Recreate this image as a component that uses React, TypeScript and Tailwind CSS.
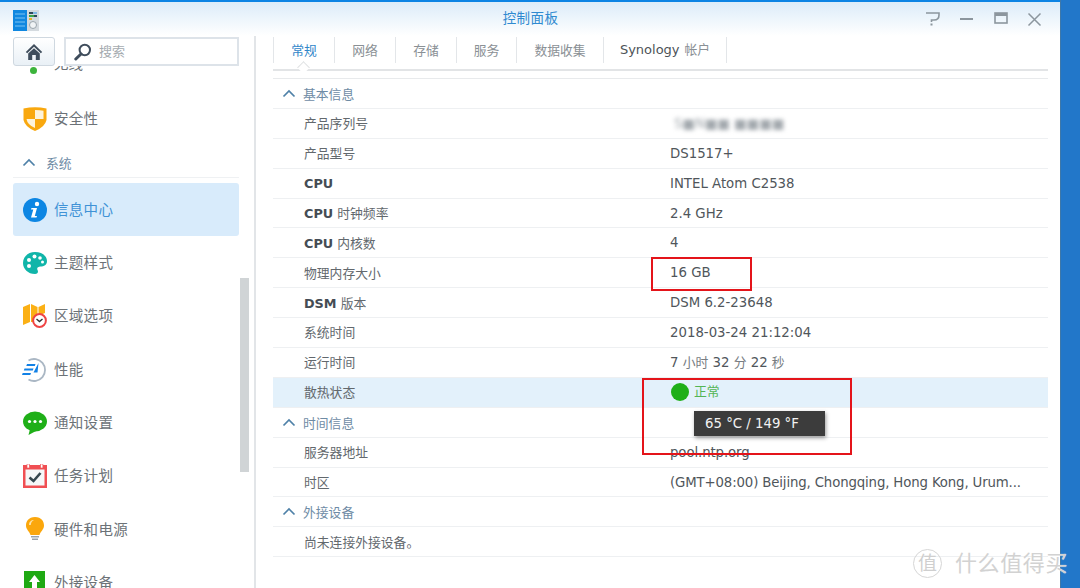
import React from "react";

const cjk = '"DejaVu Sans","Noto Sans CJK SC",sans-serif';

function Chevron({ className = "" }: { className?: string }) {
  return (
    <svg width="14" height="9" viewBox="0 0 14 9" className={className}>
      <path d="M1.5 7.5 L7 2 L12.5 7.5" fill="none" stroke="#4f81a8" strokeWidth="1.7" />
    </svg>
  );
}

function AppLogo() {
  return (
    <svg width="27" height="23" viewBox="0 0 27 23">
      <rect x="0" y="1" width="14" height="21" fill="#0f87e0" />
      <path d="M2 5h10M2 9h10M2 13h10M2 17h10" stroke="#7cc3f3" strokeWidth="1" />
      <rect x="14" y="1" width="12" height="21" fill="#d4dadf" />
      <rect x="16" y="3" width="4" height="2" fill="#2f4858" />
      <rect x="20" y="3" width="4" height="2" fill="#7cb6e2" />
      <rect x="16" y="6" width="5" height="2" fill="#3aa54a" />
      <rect x="21" y="6" width="3" height="2" fill="#2f4858" />
      <rect x="16" y="9" width="3" height="2" fill="#e8b12e" />
      <circle cx="20" cy="16" r="3.5" fill="#f0f3f5" stroke="#9aa5ad" />
    </svg>
  );
}

function HomeIcon() {
  return (
    <svg width="18" height="18" viewBox="0 0 18 18">
      <path d="M9 1 L0.8 9 L2.2 10.2 L9 3.8 L15.8 10.2 L17.2 9 Z" fill="#3f4d5c" />
      <path d="M3.2 10.5 L9 5.2 L14.8 10.5 V17 H10.8 V12 H7.2 V17 H3.2 Z" fill="#3f4d5c" />
    </svg>
  );
}

function SearchIcon() {
  return (
    <svg width="18" height="18" viewBox="0 0 18 18">
      <circle cx="10.8" cy="7" r="5.2" fill="none" stroke="#3f4d5c" strokeWidth="2" />
      <path d="M7 11 L1.8 16" stroke="#3f4d5c" strokeWidth="3" strokeLinecap="round" />
    </svg>
  );
}

const icons: Record<string, React.ReactNode> = {
  shield: (
    <svg width="24" height="24" viewBox="0 0 24 24">
      <path d="M0.5 1.5 Q12 -1 23.5 1.5 V13 Q22 20 12 24 Q2 20 0.5 13 Z" fill="#f9a80f" />
      <path d="M12 3 Q17 3 20.5 3.8 V12 H12 Z" fill="#fdf3dc" />
      <path d="M12 12 H3.5 Q4.5 18 12 21 Z" fill="#fdf3dc" />
    </svg>
  ),
  info: (
    <svg width="24" height="24" viewBox="0 0 24 24">
      <circle cx="12" cy="12" r="12" fill="#0d86e3" />
      <circle cx="14" cy="6" r="2.2" fill="#fff" />
      <path d="M8.5 10 H14 L11.8 18 H14 L13.5 19.6 H8 L10.3 11.6 H8 Z" fill="#fff" />
    </svg>
  ),
  palette: (
    <svg width="24" height="24" viewBox="0 0 24 24">
      <path d="M12 1 C5 1 0 6 0 12 C0 18 5 23 12 23 C15 23 15.5 20.5 14.5 19 C13.5 17 15 15.5 17.5 15.5 C21 15.5 24 14 24 10 C24 5 19 1 12 1 Z" fill="#10b5a9" />
      <circle cx="6" cy="9" r="2" fill="#fff" />
      <circle cx="11.5" cy="5.5" r="2" fill="#fff" />
      <circle cx="17" cy="7" r="1.8" fill="#fff" />
      <circle cx="19.5" cy="11" r="1.5" fill="#fff" />
      <circle cx="6" cy="15" r="2" fill="#fff" />
    </svg>
  ),
  map: (
    <svg width="24" height="24" viewBox="0 0 24 24">
      <path d="M0 3 L7 0 V18 L0 21 Z" fill="#fbb015" />
      <path d="M8 0 L14.5 3 V18 L8 18 Z" fill="#fbb015" />
      <path d="M15.5 3 L22 0 V9 L15.5 12 Z" fill="#fbb015" />
      <circle cx="16.5" cy="16.5" r="6.4" fill="#fff" stroke="#ef4444" strokeWidth="2" />
      <path d="M13.5 15 L16.5 17.5 L19.5 15" fill="none" stroke="#333" strokeWidth="1.4" />
    </svg>
  ),
  perf: (
    <svg width="26" height="24" viewBox="0 0 26 24">
      <path d="M6.5 2.5 A11 11 0 1 1 6.5 21.5" fill="none" stroke="#aab7c4" strokeWidth="1.8" />
      <path d="M5 6 H13.5 L12.8 8 H4.3 Z M2.5 10.5 H11.5 L10.8 12.5 H1.8 Z M0.7 15 H9 L8.3 17 H0 Z" fill="#1281e6" />
      <path d="M16.5 5 L11.5 14.5 H15.5 Z" fill="#1281e6" />
    </svg>
  ),
  chat: (
    <svg width="24" height="24" viewBox="0 0 24 24">
      <ellipse cx="12" cy="10.5" rx="12" ry="10" fill="#1faf18" />
      <path d="M7 18 L5.5 24 L13 20 Z" fill="#1faf18" />
      <circle cx="6.5" cy="10.5" r="1.6" fill="#fff" />
      <circle cx="12" cy="10.5" r="1.6" fill="#fff" />
      <circle cx="17.5" cy="10.5" r="1.6" fill="#fff" />
    </svg>
  ),
  calendar: (
    <svg width="24" height="24" viewBox="0 0 24 24">
      <rect x="0" y="1" width="24" height="23" fill="#f04f53" />
      <rect x="2.5" y="5.5" width="19" height="16" fill="#f6f7f8" />
      <rect x="4" y="0" width="2.4" height="4" fill="#fff" stroke="#f04f53" strokeWidth="0.6" />
      <rect x="17.5" y="0" width="2.4" height="4" fill="#fff" stroke="#f04f53" strokeWidth="0.6" />
      <path d="M6.5 13.5 L10.5 17 L17.5 9" fill="none" stroke="#37474f" strokeWidth="2.6" />
    </svg>
  ),
  bulb: (
    <svg width="24" height="24" viewBox="0 0 24 24">
      <path d="M12 0 C5.5 0 3 4.6 3 8.5 C3 12.5 6.5 14.5 7.5 18 H16.5 C17.5 14.5 21 12.5 21 8.5 C21 4.6 18.5 0 12 0 Z" fill="#fba70c" />
      <path d="M6 8 C6 5 8 3 11 3 C8.5 4 8 6 7.8 8 Z" fill="#fde2a8" />
      <path d="M8 19 H16 V20.5 H8 Z M9 21.5 H15 V23 H9 Z" fill="#9aa3a9" />
    </svg>
  ),
  upload: (
    <svg width="24" height="24" viewBox="0 0 24 24">
      <rect x="1" y="0" width="21" height="24" fill="#1fa913" />
      <path d="M11.5 4 L17 11 H14 V17 H9 V11 H6 Z" fill="#fff" />
    </svg>
  ),
};

function SideItem({ icon, label, active, h = "h-[53.3px]" }: { icon: string; label: string; active?: boolean; h?: string }) {
  return (
    <div className={`flex items-center pl-[9px] w-[226px] shrink-0 ${h} ${active ? "bg-[#d8ebfb] rounded-[3px]" : ""}`}>
      <span className="w-[26px] h-6 flex items-center justify-center shrink-0">{icons[icon]}</span>
      <span className={`ml-[6px] pt-[2px] text-[14.5px] tracking-[0.3px] ${active ? "text-[#3f92d6]" : "text-[#6c7277]"}`}>{label}</span>
    </div>
  );
}

function Row({ label, children, hover }: { label: React.ReactNode; children: React.ReactNode; hover?: boolean }) {
  return (
    <div className={`flex items-center h-[29.9px] border-b border-[#eef0f2] ${hover ? "bg-[#e3f1fb]" : ""}`}>
      <div className="w-[397px] pl-[31px] shrink-0 pt-[1px] text-[12.8px] text-[#62686d]">{label}</div>
      <div className="text-[13.3px] pt-[1px] text-[#50565b]">{children}</div>
    </div>
  );
}

function B({ children }: { children: React.ReactNode }) {
  return <b className="font-bold text-[#454c54]">{children}</b>;
}

function Z({ children }: { children: React.ReactNode }) {
  return <span className="text-[12.8px] text-[#777d82]">{children}</span>;
}

function Section({ label }: { label: string }) {
  return (
    <div className="flex items-center h-[29.9px] border-b border-[#eef0f2] pl-[9px]">
      <Chevron />
      <span className="ml-[7px] pt-[2px] text-[12.8px] text-[#6e8ba5]">{label}</span>
    </div>
  );
}

const tabs: [string, string][] = [
  ["常规", "w-[61px]"],
  ["网络", "w-[61px]"],
  ["存储", "w-[61px]"],
  ["服务", "w-[60px]"],
  ["数据收集", "w-[87px]"],
];

export default function App() {
  return (
    <div className="relative w-[1080px] h-[588px] overflow-hidden bg-[#2277c9] flex" style={{ fontFamily: cjk }}>
      <div className="w-[1061px] h-full bg-white border-r border-[#3f78a8] flex flex-col shrink-0">
        {/* title bar */}
        <div className="h-[36px] shrink-0 border-t-2 border-[#0c84e4] bg-gradient-to-b from-[#dcecf9] to-white flex items-center relative">
          <div className="ml-[13px] mt-[2px]"><AppLogo /></div>
          <div className="absolute left-0 right-0 top-[6px] text-center text-[13.5px] tracking-[0.4px] text-[#2f8ad0] pl-[1px]">控制面板</div>
          <div className="ml-auto mr-[18px] flex items-center gap-[17px]">
            <svg width="16" height="16" viewBox="0 0 16 16">
              <path d="M1 2 H14 V4 Q14 9 9 9 H6.5 V11 M1 2" fill="none" stroke="#8c969e" strokeWidth="1.6" />
              <rect x="5.5" y="12.5" width="2" height="2" fill="#8c969e" />
            </svg>
            <svg width="15" height="16" viewBox="0 0 15 16" className="ml-[1px]"><path d="M1 8 H14" stroke="#8c969e" strokeWidth="2" /></svg>
            <svg width="15" height="14" viewBox="0 0 15 14" className="ml-[3px]">
              <rect x="1" y="1" width="12" height="10" fill="none" stroke="#8c969e" strokeWidth="1.6" />
              <rect x="1" y="1" width="12" height="3" fill="#8c969e" />
            </svg>
            <svg width="15" height="15" viewBox="0 0 15 15" className="ml-[1px]"><path d="M1.5 1.5 L13.5 13.5 M13.5 1.5 L1.5 13.5" stroke="#8c969e" strokeWidth="1.5" /></svg>
          </div>
        </div>

        <div className="flex flex-1 min-h-0">
          {/* sidebar */}
          <div className="w-[256px] shrink-0 border-r-2 border-[#e2e5e8] relative overflow-hidden">
            <div className="absolute z-10 left-0 top-0 w-[254px] h-[30px] bg-white flex pl-[13px] gap-[9px] pt-[1px]">
              <div className="w-[42px] h-[29px] rounded-[3px] border border-[#cfd8e0] bg-gradient-to-b from-white to-[#e9f0f6] flex items-center justify-center"><HomeIcon /></div>
              <div className="w-[175px] h-[29px] border-2 border-[#dde3e9] bg-white flex items-center pl-[8px]">
                <SearchIcon />
                <span className="ml-[7px] text-[13px] text-[#a5abb0]">搜索</span>
              </div>
            </div>
            <div className="pl-[13px] flex flex-col">
              <div className="h-[56px] shrink-0 relative">
                <span className="absolute left-[17px] top-[31px] w-[7px] h-[7px] rounded-full bg-[#3cb43c]" />
                <span className="absolute left-[41px] top-[18px] text-[14.5px] text-[#6c7277]">无线</span>
              </div>
              <SideItem icon="shield" label="安全性" h="h-[53px]" />
              <div className="w-[226px] h-[30px] shrink-0 border-b border-[#eff1f3] flex items-center pl-[9px] mt-[3px]">
                <Chevron />
                <span className="ml-[10px] pt-[2px] text-[12.8px] text-[#6e8ba5]">系统</span>
              </div>
              <div className="h-[5px] shrink-0" />
              <SideItem icon="info" label="信息中心" active />
              <SideItem icon="palette" label="主题样式" />
              <SideItem icon="map" label="区域选项" />
              <SideItem icon="perf" label="性能" />
              <SideItem icon="chat" label="通知设置" />
              <SideItem icon="calendar" label="任务计划" />
              <SideItem icon="bulb" label="硬件和电源" />
              <SideItem icon="upload" label="外接设备" />
            </div>
            <div className="absolute left-[240px] top-[242px] w-[9px] h-[194px] bg-[#d0d4d6]" />
          </div>

          {/* main */}
          <div className="flex-1 min-w-0 pl-[17px] pr-[12px] overflow-hidden">
            <div className="relative h-[34px] mt-[1px] border-b-2 border-[#e2e4e6] flex items-start">
              <div className="flex h-[26px] border-l border-[#e3e6e9]">
                {tabs.map(([t, w], i) => (
                  <div key={t} className={`${w} border-r border-[#e3e6e9] flex items-center justify-center pt-[1px] text-[12.8px] ${i === 0 ? "text-[#2f86c9]" : "text-[#8a9095]"}`}>{t}</div>
                ))}
                <div className="w-[123px] border-r border-[#e3e6e9] flex items-center justify-center text-[13px] text-[#4d5358]">
                  Synology<span className="ml-[5px] text-[12.8px] text-[#8a9095]">帐户</span>
                </div>
              </div>
              <div className="absolute left-[26px] bottom-[-4px] w-[9px] h-[9px] rotate-45 bg-white border-l border-t border-[#dfe1e3] mb-[1px]" />
            </div>
            <div className="h-[8px] border-b border-[#e8eaec]" />
            <div className="flex flex-col">
              <Section label="基本信息" />
              <Row label="产品序列号"><span className="block ml-[4px] text-[#a3a9ae] blur-[2.2px]">S■N■■ ■■■■</span></Row>
              <Row label="产品型号">DS1517+</Row>
              <Row label={<B>CPU</B>}>INTEL Atom C2538</Row>
              <Row label={<><B>CPU</B> 时钟频率</>}>2.4 GHz</Row>
              <Row label={<><B>CPU</B> 内核数</>}>4</Row>
              <Row label="物理内存大小">16 GB</Row>
              <Row label={<><B>DSM</B> 版本</>}>DSM 6.2-23648</Row>
              <Row label="系统时间">2018-03-24 21:12:04</Row>
              <Row label="运行时间">7 <Z>小时</Z> 32 <Z>分</Z> 22 <Z>秒</Z></Row>
              <Row label="散热状态" hover>
                <span className="flex items-center mb-[2px]">
                  <span className="w-[18px] h-[18px] rounded-full bg-[#1faf18] mr-[5px] ml-[1px]" />
                  <span className="text-[12.8px] text-[#53b553]">正常</span>
                </span>
              </Row>
              <Section label="时间信息" />
              <Row label="服务器地址"><span className="tracking-[-0.1px]">pool.ntp.org</span></Row>
              <Row label="时区"><span className="tracking-[-0.14px]">(GMT+08:00) Beijing, Chongqing, Hong Kong, Urum...</span></Row>
              <Section label="外接设备" />
              <div className="flex items-center h-[29.9px] border-b border-[#eef0f2] pl-[31px] pt-[1px] text-[12.8px] text-[#62686d]">尚未连接外接设备。</div>
            </div>
          </div>
        </div>
      </div>

      {/* tooltip */}
      <div className="absolute left-[694px] top-[411px] w-[131px] h-[25px] bg-[#3c3c3c] shadow-[1px_2px_4px_rgba(0,0,0,0.4)] text-[#f2f2f2] text-[13.3px] flex items-center pl-[11px]">65 °C / 149 °F</div>
      {/* red annotations */}
      <div className="absolute left-[651px] top-[257px] w-[101px] h-[34px] border-2 border-[#e4141a]" />
      <div className="absolute left-[642px] top-[378px] w-[210px] h-[77px] border-2 border-[#e4141a]" />
      {/* watermark */}
      <div className="absolute left-[913px] top-[547px] flex items-center text-[#c9c9c9]">
        <span className="w-[29px] h-[29px] rounded-full border border-[#d6d6d6] flex items-center justify-center text-[19px] text-[#cfcfcf]">值</span>
        <span className="ml-[13px] text-[22px] tracking-[0.6px] text-[#d2d2d2] [text-shadow:0_0_1px_#ffffff]">什么值得买</span>
      </div>
    </div>
  );
}
